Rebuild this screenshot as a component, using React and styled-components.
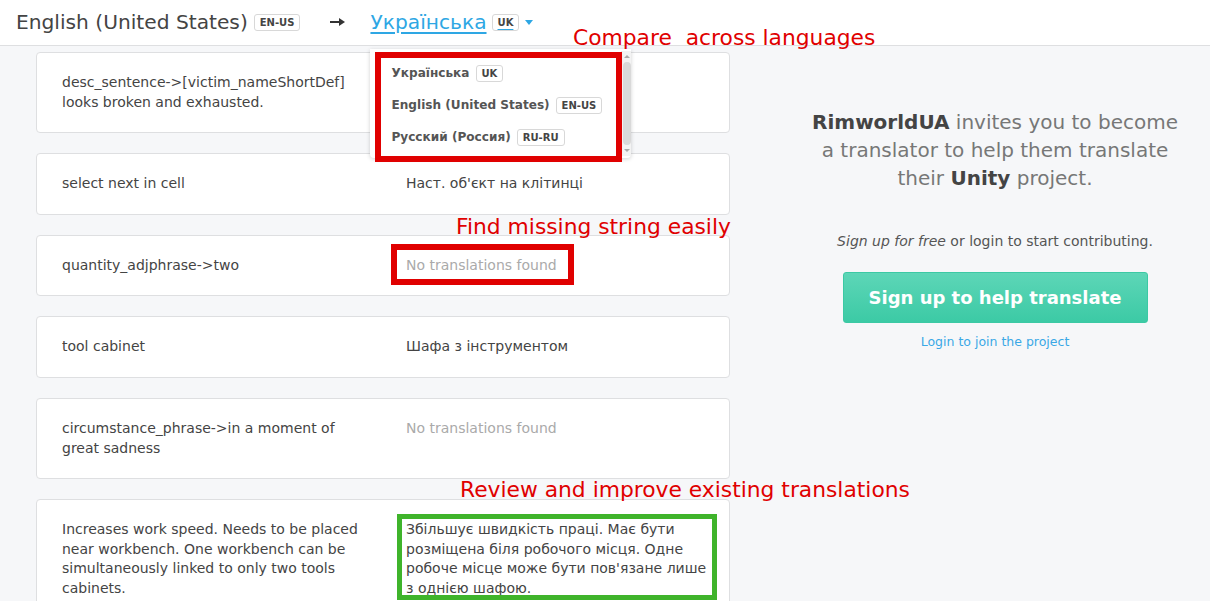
import React from 'react';
import styled, { createGlobalStyle } from 'styled-components';

const GlobalStyle = createGlobalStyle`
  html, body {
    margin: 0;
    padding: 0;
    background: #f6f7f9;
    font-family: "DejaVu Sans", "Noto Sans", sans-serif;
    color: #444;
  }
  * { box-sizing: border-box; }
`;

const Page = styled.div`
  position: relative;
  width: 1210px;
  height: 601px;
  overflow: hidden;
`;

const Header = styled.header`
  display: flex;
  align-items: center;
  height: 46px;
  padding: 0 0 1px 16px;
  background: #fff;
  border-bottom: 1px solid #dedfe1;
  font-size: 20.2px;
  color: #444;
`;

const Lang = styled.span`
  display: inline-flex;
  align-items: center;
  gap: 6px;
`;

const Badge = styled.span`
  display: inline-block;
  padding: 1px 5px;
  border: 1px solid #d8d8d8;
  border-radius: 3px;
  background: #fff;
  color: #444;
  font-size: 10px;
  font-weight: bold;
  line-height: 13px;
  text-decoration: none;
`;

const Arrow = styled.span`
  display: inline-flex;
  margin: 0 25px 0 30px;
`;

const TargetWrap = styled.div`
  position: relative;
`;

const TargetLink = styled.a`
  display: inline-flex;
  align-items: center;
  gap: 5px;
  color: #2ea7e4;
  text-decoration: underline;
  text-underline-offset: 3px;
  cursor: pointer;
`;

const Caret = styled.span`
  display: inline-block;
  width: 0;
  height: 0;
  margin-left: 1px;
  border-left: 4px solid transparent;
  border-right: 4px solid transparent;
  border-top: 5px solid #2ea7e4;
`;

const Dropdown = styled.div`
  position: absolute;
  top: 39px;
  left: 0;
  width: 261px;
  height: 109px;
  display: flex;
  background: #fff;
  border-radius: 0 0 4px 4px;
  box-shadow: 0 1px 4px rgba(0, 0, 0, 0.18);
  z-index: 5;
`;

const DropList = styled.ul`
  flex: 1;
  list-style: none;
  margin: 0;
  padding: 8px 0 0 21px;
`;

const DropItem = styled.li`
  display: flex;
  align-items: center;
  gap: 6px;
  height: 32px;
  font-size: 12.1px;
  font-weight: bold;
  color: #555;
`;

const Scrollbar = styled.div`
  display: flex;
  flex-direction: column;
  align-items: center;
  width: 10px;
  margin: 2px 0;
  background: #f3f3f3;
  border-left: 1px solid #e6e6e6;
`;

const ScrollArrow = styled.span`
  width: 0;
  height: 0;
  margin: 4px 0;
  border-left: 3px solid transparent;
  border-right: 3px solid transparent;
  ${(p) => (p.down ? 'border-top: 3px solid #aaa;' : 'border-bottom: 3px solid #aaa;')}
`;

const ScrollThumb = styled.span`
  flex: 1;
  width: 8px;
  background: #d9d9d9;
  border-radius: 4px;
`;

const Body = styled.div`
  display: flex;
  padding: 6px 0 0 36px;
`;

const List = styled.div`
  display: flex;
  flex-direction: column;
  gap: 20px;
  width: 694px;
  flex-shrink: 0;
`;

const Card = styled.div`
  display: grid;
  grid-template-columns: 310px 1fr;
  column-gap: 34px;
  align-items: start;
  padding: 20px 20px 20px 25px;
  background: #fff;
  border: 1px solid #dedfe1;
  border-radius: 4px;
  font-size: 14px;
  line-height: 19.6px;
  color: #444;
`;

const Missing = styled.span`
  color: #aaa;
`;

const Side = styled.aside`
  flex: 1;
  display: flex;
  flex-direction: column;
  align-items: center;
  padding: 56px 0 0 50px;
  text-align: center;
`;

const Invite = styled.p`
  max-width: 372px;
  margin: 0;
  font-size: 20px;
  line-height: 28px;
  color: #777;

  b { color: #444; }
`;

const Hint = styled.p`
  margin: 39px 0 0;
  font-size: 14px;
  line-height: 20px;
  color: #555;
`;

const SignUp = styled.button`
  width: 305px;
  height: 51px;
  margin-top: 21px;
  border: 1px solid #3cc9a4;
  border-radius: 3px;
  background: linear-gradient(#5dd6b7, #3ccaa5);
  color: #fff;
  font-family: inherit;
  font-size: 18px;
  font-weight: bold;
  cursor: pointer;
`;

const LoginLink = styled.a`
  margin-top: 11px;
  font-size: 12.5px;
  color: #3aa8e6;
  text-decoration: none;
`;

const Frame = styled.div`
  position: absolute;
  left: ${(p) => p.x}px;
  top: ${(p) => p.y}px;
  width: ${(p) => p.w}px;
  height: ${(p) => p.h}px;
  border: ${(p) => p.t || 6}px solid ${(p) => (p.green ? '#3fb42b' : '#e00000')};
  pointer-events: none;
  z-index: 10;
`;

const Note = styled.span`
  position: absolute;
  left: ${(p) => p.x}px;
  top: ${(p) => p.y}px;
  font-family: "DejaVu Sans", sans-serif;
  font-size: 21.8px;
  line-height: 26px;
  color: #e00000;
  white-space: pre;
  z-index: 10;
`;

const rows = [
  { src: 'desc_sentence->[victim_nameShortDef] looks broken and exhausted.', dst: '' },
  { src: 'select next in cell', dst: 'Наст. об\'єкт на клітинці' },
  { src: 'quantity_adjphrase->two', dst: null },
  { src: 'tool cabinet', dst: 'Шафа з інструментом' },
  { src: 'circumstance_phrase->in a moment of great sadness', dst: null },
  {
    src: 'Increases work speed. Needs to be placed near workbench. One workbench can be simultaneously linked to only two tools cabinets.',
    dst: 'Збільшує швидкість праці. Має бути розміщена біля робочого місця. Одне робоче місце може бути пов\'язане лише з однією шафою.',
  },
];

const languages = [
  ['Українська', 'UK'],
  ['English (United States)', 'EN-US'],
  ['Русский (Россия)', 'RU-RU'],
];

export default function App() {
  return (
    <Page>
      <GlobalStyle />
      <Header>
        <Lang>
          English (United States)
          <Badge>EN-US</Badge>
        </Lang>
        <Arrow>
          <svg width="15" height="8" viewBox="0 0 15 8">
            <rect x="0" y="3" width="10" height="2" fill="#333" />
            <path d="M9 0 L15 4 L9 8 Z" fill="#333" />
          </svg>
        </Arrow>
        <TargetWrap>
          <TargetLink>
            Українська
            <Badge>UK</Badge>
            <Caret />
          </TargetLink>
          <Dropdown>
            <DropList>
              {languages.map(([name, code]) => (
                <DropItem key={code}>
                  {name}
                  <Badge>{code}</Badge>
                </DropItem>
              ))}
            </DropList>
            <Scrollbar>
              <ScrollArrow />
              <ScrollThumb />
              <ScrollArrow down />
            </Scrollbar>
          </Dropdown>
        </TargetWrap>
      </Header>

      <Body>
        <List>
          {rows.map((r) => (
            <Card key={r.src}>
              <span>{r.src}</span>
              {r.dst === null ? <Missing>No translations found</Missing> : <span>{r.dst}</span>}
            </Card>
          ))}
        </List>
        <Side>
          <Invite>
            <b>RimworldUA</b> invites you to become a translator to help them translate their <b>Unity</b> project.
          </Invite>
          <Hint>
            <i>Sign up for free</i> or login to start contributing.
          </Hint>
          <SignUp>Sign up to help translate</SignUp>
          <LoginLink>Login to join the project</LoginLink>
        </Side>
      </Body>

      <Frame x={375} y={52} w={247} h={110} />
      <Frame x={391} y={244} w={183} h={41} />
      <Frame x={397} y={514} w={320} h={86} t={5} green />
      <Note x={573} y={25}>Compare  across languages</Note>
      <Note x={456} y={214}>Find missing string easily</Note>
      <Note x={460} y={477}>Review and improve existing translations</Note>
    </Page>
  );
}
